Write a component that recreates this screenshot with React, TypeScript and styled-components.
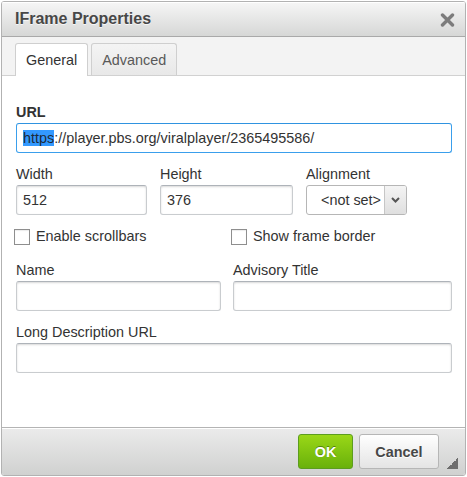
import React from 'react';
import styled, { createGlobalStyle } from 'styled-components';

const GlobalStyle = createGlobalStyle`
  html, body {
    margin: 0;
    padding: 0;
    background: #fff;
  }
  body {
    font-family: "Liberation Sans", Arial, sans-serif;
  }
`;

// Dialog frame
const Dialog = styled.div`
  box-sizing: border-box;
  width: 465px;
  height: 475px;
  margin: 1px 0 0 1px;
  display: flex;
  flex-direction: column;
  border: 1px solid #b2b2b2;
  border-radius: 3px;
  overflow: hidden;
  background: #fff;
  font-size: 14.4px;
  color: #333;
`;

const TitleBar = styled.div`
  box-sizing: border-box;
  flex: none;
  height: 35px;
  display: flex;
  align-items: center;
  justify-content: space-between;
  padding: 0 10px 0 13px;
  border-bottom: 1px solid #a9a9a9;
  background: linear-gradient(#f6f6f6, #d6d7d6);
  box-shadow: inset 0 1px 0 #fff;
`;

const Title = styled.h1`
  margin: 0;
  font-size: 16px;
  font-weight: bold;
  color: #474747;
  text-shadow: 0 1px 0 rgba(255, 255, 255, 0.75);
`;

const CloseButton = styled.button`
  display: flex;
  width: 15px;
  height: 14px;
  margin-top: 1px;
  padding: 0;
  border: 0;
  background: none;
  cursor: pointer;
`;

// Tabs
const TabStrip = styled.div`
  box-sizing: border-box;
  flex: none;
  height: 39px;
  display: flex;
  align-items: flex-end;
  gap: 3px;
  padding-left: 13px;
  border-bottom: 1px solid #d1d1d1;
  background: #f3f3f3;
`;

const Tab = styled.div<{ $active?: boolean }>`
  box-sizing: border-box;
  height: ${p => (p.$active ? 33 : 32)}px;
  margin-bottom: ${p => (p.$active ? -1 : 0)}px;
  padding: 0 10px;
  display: flex;
  align-items: center;
  border: 1px solid #cfcfcf;
  border-bottom: none;
  border-radius: 3px 3px 0 0;
  background: ${p => (p.$active ? '#fff' : 'linear-gradient(#f4f4f4, #e8e8e8)')};
  color: ${p => (p.$active ? '#333' : '#595959')};
  cursor: pointer;
`;

// Form body
const Body = styled.div`
  flex: 1;
  display: flex;
  flex-direction: column;
  gap: 13px;
  padding: 28px 13px 0 14px;
  background: #fff;
`;

const Field = styled.div`
  display: flex;
  flex-direction: column;
  gap: 2px;
  min-width: 0;
`;

const Label = styled.label<{ $strong?: boolean }>`
  line-height: 17px;
  font-weight: ${p => (p.$strong ? 'bold' : 'normal')};
  color: #333;
`;

const ThreeCols = styled.div`
  display: grid;
  grid-template-columns: 131px 133px 1fr;
  column-gap: 13px;
`;

const TwoCols = styled.div`
  display: grid;
  grid-template-columns: 205px 219px;
  column-gap: 12px;
`;

const CheckRow = styled(TwoCols)`
  margin-bottom: 4px;
`;

const TextInput = styled.input`
  box-sizing: border-box;
  width: 100%;
  height: 30px;
  margin: 0;
  padding: 0 6px;
  border: 1px solid #c9cccf;
  border-top-color: #aeb3b9;
  border-radius: 3px;
  box-shadow: inset 0 1px 2px rgba(0, 0, 0, 0.15);
  background: #fff;
  font: inherit;
  color: #333;
  outline: none;
`;

const FocusedBox = styled.div`
  box-sizing: border-box;
  height: 30px;
  display: flex;
  align-items: center;
  padding: 0 6px;
  border: 1px solid #3a9fec;
  border-top-color: #2f93e0;
  border-radius: 3px;
  background: #fff;
  white-space: nowrap;
  overflow: hidden;
  color: #333;
`;

const Selected = styled.span`
  background: #3399ff;
  color: #1d2a3a;
  line-height: 16px;
`;

const Select = styled.div`
  box-sizing: border-box;
  width: 101px;
  height: 30px;
  display: flex;
  border: 1px solid #b6b6b6;
  border-radius: 3px;
  overflow: hidden;
  background: #fff;
`;

const SelectValue = styled.span`
  flex: 1;
  display: flex;
  align-items: center;
  padding-left: 14px;
  white-space: nowrap;
  color: #333;
`;

const SelectArrow = styled.span`
  width: 21px;
  display: flex;
  align-items: center;
  justify-content: center;
  border-left: 1px solid #c6c6c6;
  background: linear-gradient(#f4f4f4, #dfdfdf);
`;

const CheckItem = styled.label`
  display: flex;
  align-items: center;
  gap: 6px;
  margin-left: -2px;
  line-height: 17px;
  color: #333;
`;

const CheckBox = styled.input`
  appearance: none;
  box-sizing: border-box;
  width: 16px;
  height: 16px;
  margin: 0;
  border: 1px solid #8e8e8e;
  background: #fff;
  box-shadow: inset 0 1px 1px rgba(0, 0, 0, 0.08);
`;

// Footer
const Footer = styled.div`
  box-sizing: border-box;
  flex: none;
  height: 48px;
  display: flex;
  justify-content: flex-end;
  align-items: flex-start;
  padding: 6px 7px 0 0;
  border-top: 1px solid #b4b4b4;
  box-shadow: inset 0 1px 0 #fff;
  background: linear-gradient(#ebebeb, #d0d1d0);
`;

const ButtonGroup = styled.div`
  display: flex;
  gap: 6px;
`;

const Button = styled.button<{ $primary?: boolean }>`
  box-sizing: border-box;
  height: 35px;
  margin: 0;
  padding: 0 15.5px;
  border: 1px solid ${p => (p.$primary ? '#5c9d1e' : '#b6b6b6')};
  border-radius: 3px;
  background: ${p =>
    p.$primary ? 'linear-gradient(#9ad717, #69b10b)' : 'linear-gradient(#fff, #e4e4e4)'};
  color: ${p => (p.$primary ? '#fff' : '#474747')};
  text-shadow: ${p => (p.$primary ? '0 -1px 0 #55830c' : '0 1px 0 #fff')};
  font: bold 14.4px "Liberation Sans", Arial, sans-serif;
  cursor: pointer;
`;

const Grip = styled.span`
  align-self: flex-end;
  width: 11px;
  height: 11px;
  margin: 0 0 6.5px 8px;
  background: linear-gradient(135deg, transparent 50%, #6e6e6e 50%);
`;

export default function App() {
  return (
    <>
      <GlobalStyle />
      <Dialog>
        <TitleBar>
          <Title>IFrame Properties</Title>
          <CloseButton aria-label="Close">
            <svg width="15" height="14" viewBox="0 0 15 14">
              <path
                d="M2.5 2 L12.5 12 M12.5 2 L2.5 12"
                stroke="#7c7c7c"
                strokeWidth="3.4"
                strokeLinecap="round"
              />
            </svg>
          </CloseButton>
        </TitleBar>

        <TabStrip>
          <Tab $active>General</Tab>
          <Tab>Advanced</Tab>
        </TabStrip>

        <Body>
          <Field>
            <Label $strong>URL</Label>
            <FocusedBox>
              <Selected>https</Selected>://player.pbs.org/viralplayer/2365495586/
            </FocusedBox>
          </Field>

          <ThreeCols>
            <Field>
              <Label>Width</Label>
              <TextInput value="512" readOnly />
            </Field>
            <Field>
              <Label>Height</Label>
              <TextInput value="376" readOnly />
            </Field>
            <Field>
              <Label>Alignment</Label>
              <Select>
                <SelectValue>&lt;not set&gt;</SelectValue>
                <SelectArrow>
                  <svg width="9" height="6" viewBox="0 0 9 6">
                    <path d="M1 1 L4.5 4.5 L8 1" fill="none" stroke="#555" strokeWidth="2" />
                  </svg>
                </SelectArrow>
              </Select>
            </Field>
          </ThreeCols>

          <CheckRow>
            <CheckItem>
              <CheckBox type="checkbox" readOnly />
              Enable scrollbars
            </CheckItem>
            <CheckItem>
              <CheckBox type="checkbox" readOnly />
              Show frame border
            </CheckItem>
          </CheckRow>

          <TwoCols>
            <Field>
              <Label>Name</Label>
              <TextInput value="" readOnly />
            </Field>
            <Field>
              <Label>Advisory Title</Label>
              <TextInput value="" readOnly />
            </Field>
          </TwoCols>

          <Field>
            <Label>Long Description URL</Label>
            <TextInput value="" readOnly />
          </Field>
        </Body>

        <Footer>
          <ButtonGroup>
            <Button $primary>OK</Button>
            <Button>Cancel</Button>
          </ButtonGroup>
          <Grip />
        </Footer>
      </Dialog>
    </>
  );
}
